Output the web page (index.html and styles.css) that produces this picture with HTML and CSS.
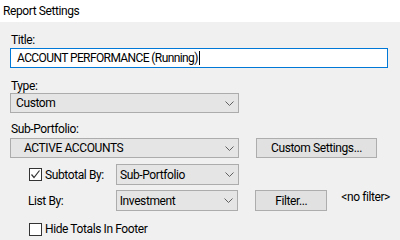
FILE: index.html
```html
<!DOCTYPE html>
<html lang="en">
<head>
    <meta charset="UTF-8">
    <title>Report Settings</title>
    <link rel="stylesheet" href="styles.css">
</head>
<body>
    <div class="titlebar">Report Settings</div>

    <div class="form">
        <div class="label">Title:</div>
        <div class="textbox">ACCOUNT PERFORMANCE (Running)<span class="caret"></span></div>

        <div class="label type-label">Type:</div>
        <div class="combo combo-type">
            <span>Custom</span>
            <svg class="chevron" width="9" height="5" viewBox="0 0 9 5"><polyline points="0.5,0.5 4.5,4.5 8.5,0.5" fill="none" stroke="#606060" stroke-width="1"/></svg>
        </div>

        <div class="label sub-label">Sub-Portfolio:</div>
        <div class="row row-sub">
            <div class="combo combo-sub">
                <span>ACTIVE ACCOUNTS</span>
                <svg class="chevron" width="9" height="5" viewBox="0 0 9 5"><polyline points="0.5,0.5 4.5,4.5 8.5,0.5" fill="none" stroke="#606060" stroke-width="1"/></svg>
            </div>
            <div class="button btn-custom">Custom Settings...</div>
        </div>

        <div class="row row-subtotal">
            <div class="check-label subtotal-check">
                <span class="checkbox">
                    <svg width="11" height="11" viewBox="0 0 11 11"><polyline points="1.5,5.5 4,8.5 9.5,1.5" fill="none" stroke="#333" stroke-width="1.2"/></svg>
                </span>
                Subtotal By:
            </div>
            <div class="combo combo-small">
                <span>Sub-Portfolio</span>
                <svg class="chevron" width="9" height="5" viewBox="0 0 9 5"><polyline points="0.5,0.5 4.5,4.5 8.5,0.5" fill="none" stroke="#606060" stroke-width="1"/></svg>
            </div>
        </div>

        <div class="row row-list">
            <div class="plain-label">List By:</div>
            <div class="combo combo-small">
                <span>Investment</span>
                <svg class="chevron" width="9" height="5" viewBox="0 0 9 5"><polyline points="0.5,0.5 4.5,4.5 8.5,0.5" fill="none" stroke="#606060" stroke-width="1"/></svg>
            </div>
            <div class="button btn-filter">Filter...</div>
            <div class="no-filter">&lt;no filter&gt;</div>
        </div>

        <div class="row row-hide">
            <div class="check-label">
                <span class="checkbox"></span>
                Hide Totals In Footer
            </div>
        </div>
    </div>
</body>
</html>
```

FILE: styles.css
```css
body {
    margin: 0;
    background-color: #f0f0f0;
    font-family: Roboto, "Liberation Sans", sans-serif;
    font-size: 12px;
    line-height: 14px;
    letter-spacing: -0.4px;
    color: #000;
}
.titlebar {
    background-color: #fff;
    height: 22px;
    padding: 4px 0 0 3px;
    box-sizing: border-box;
}
.form {
    padding: 11px 10px 0 10px;
}
.label {
    padding-left: 1px;
    height: 14px;
}
.type-label {
    margin-top: 11px;
}
.sub-label {
    margin-top: 9px;
}
.textbox {
    margin-top: 1px;
    width: 378px;
    height: 20px;
    box-sizing: border-box;
    border: 1px solid #0078d7;
    background-color: #fff;
    padding: 2px 0 0 6px;
    letter-spacing: -0.6px;
}
.caret {
    display: inline-block;
    width: 1px;
    height: 14px;
    margin-left: 1px;
    background-color: #000;
    vertical-align: top;
}
.combo {
    display: flex;
    align-items: center;
    justify-content: space-between;
    box-sizing: border-box;
    height: 20px;
    border: 1px solid #acacac;
    background-color: #e5e5e5;
    padding: 0 4px 0 5px;
}
.chevron {
    flex-shrink: 0;
}
.combo-type {
    width: 229px;
}
.row {
    display: flex;
    align-items: center;
}
.row-sub {
    margin-top: 2px;
}
.combo-sub {
    width: 229px;
    padding-left: 13px;
}
.button {
    box-sizing: border-box;
    height: 20px;
    border: 1px solid #adadad;
    background-color: #e1e1e1;
    display: flex;
    align-items: center;
    justify-content: center;
}
.btn-custom {
    margin-left: 17px;
    width: 121px;
}
.row-subtotal {
    margin-top: 6px;
}
.check-label {
    display: flex;
    align-items: center;
    margin-left: 19px;
    white-space: nowrap;
}
.subtotal-check {
    width: 87px;
}
.checkbox {
    flex-shrink: 0;
    display: inline-flex;
    align-items: center;
    justify-content: center;
    width: 13px;
    height: 13px;
    box-sizing: border-box;
    border: 1px solid #333;
    background-color: #fff;
    margin-right: 3px;
}
.combo-small {
    width: 123px;
    height: 21px;
    padding-left: 3px;
}
.row-list {
    margin-top: 5px;
}
.plain-label {
    width: 88px;
    margin-left: 18px;
}
.btn-filter {
    margin-left: 17px;
    width: 72px;
    height: 21px;
}
.no-filter {
    margin-left: 14px;
    margin-top: -8px;
    white-space: nowrap;
}
.row-hide {
    margin-top: 11px;
}
```
